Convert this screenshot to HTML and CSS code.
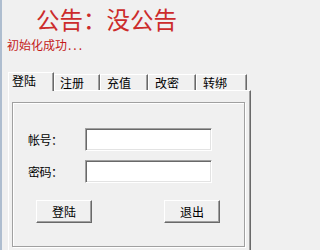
FILE: index.html
```html
<!DOCTYPE html>
<html lang="zh">
<head>
<meta charset="utf-8">
<title>登陆</title>
<link rel="stylesheet" href="styles.css">
</head>
<body>
<div class="window">
  <div class="notice">公告：没公告</div>
  <div class="status">初始化成功<span class="dots">...</span></div>
  <div class="tabs">
    <div class="tab active w1">登陆</div>
    <div class="tab w2">注册</div>
    <div class="tab w3">充值</div>
    <div class="tab w3">改密</div>
    <div class="tab w4">转绑</div>
  </div>
  <div class="pane">
    <div class="group">
      <div class="form">
        <label class="label">帐号：</label>
        <div class="input"></div>
        <label class="label">密码：</label>
        <div class="input"></div>
      </div>
      <div class="buttons">
        <div class="btn">登陆</div>
        <div class="btn">退出</div>
      </div>
    </div>
  </div>
</div>
</body>
</html>
```

FILE: styles.css
```css
html, body {
  margin: 0;
  padding: 0;
}
body {
  width: 252px;
  height: 250px;
  overflow: hidden;
  background: #f0f0f0;
  font-family: "Noto Sans CJK SC", "DejaVu Sans", sans-serif;
  font-size: 12px;
  color: #000;
}
.window {
  height: 250px;
  box-sizing: border-box;
  border-left: 2px solid #aebdcf;
  overflow: hidden;
}
.notice {
  margin: 7px 0 0 34px;
  font-size: 23.5px;
  line-height: 24px;
  color: #cc2b2b;
  white-space: nowrap;
}
.status {
  margin-top: 7px;
  padding-left: 5px;
  font-size: 12px;
  line-height: 14px;
  color: #c41a1a;
  white-space: nowrap;
}
.dots {
  letter-spacing: 2px;
  padding-left: 1px;
}
.tabs {
  display: flex;
  align-items: flex-end;
  margin: 20px 0 0 6px;
  height: 18px;
}
.tab {
  box-sizing: border-box;
  height: 16px;
  padding: 1px 0 0 6px;
  line-height: 14px;
  border-top: 1px solid #ffffff;
  border-left: 1px solid #ffffff;
  border-right: 1px solid #696969;
  box-shadow: inset -1px 0 #a0a0a0;
  background: #f0f0f0;
  white-space: nowrap;
}
.tab.active {
  position: relative;
  z-index: 1;
  height: 19px;
  margin-bottom: -1px;
  padding-left: 3px;
}
.tab.w1 { width: 46px; }
.tab.w2 { width: 46px; padding-left: 5px; }
.tab.w3 { width: 48px; }
.tab.w4 { width: 51px; }
.pane {
  box-sizing: border-box;
  margin: 0 1px 0 6px;
  height: 170px;
  border-top: 1px solid #ffffff;
  border-left: 1px solid #ffffff;
  border-right: 1px solid #696969;
  box-shadow: inset -1px 0 #a0a0a0;
  padding: 11px 0 0 3px;
}
.group {
  box-sizing: border-box;
  width: 233px;
  height: 145px;
  border: 1px solid #a0a0a0;
  box-shadow: inset 1px 1px #ffffff, 1px 1px #ffffff;
  padding: 25px 0 0 15px;
}
.form {
  display: grid;
  grid-template-columns: 57px 127px;
  row-gap: 9px;
  align-items: center;
}
.label {
  line-height: 14px;
  letter-spacing: -0.5px;
  white-space: nowrap;
}
.input {
  box-sizing: border-box;
  height: 23px;
  background: #ffffff;
  border-top: 1px solid #a0a0a0;
  border-left: 1px solid #a0a0a0;
  border-right: 1px solid #ffffff;
  border-bottom: 1px solid #ffffff;
  box-shadow: inset 1px 1px #696969, inset -1px -1px #e3e3e3;
}
.buttons {
  display: flex;
  gap: 72px;
  margin: 17px 0 0 8px;
}
.btn {
  box-sizing: border-box;
  width: 56px;
  height: 23px;
  display: flex;
  align-items: center;
  justify-content: center;
  background: #f0f0f0;
  border-top: 1px solid #ffffff;
  border-left: 1px solid #ffffff;
  border-right: 1px solid #696969;
  border-bottom: 1px solid #696969;
  box-shadow: inset -1px -1px #a0a0a0;
  line-height: 14px;
}
```
